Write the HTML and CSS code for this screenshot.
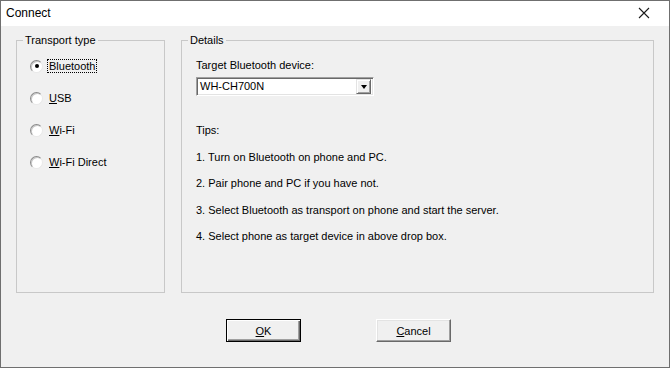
FILE: index.html
```html
<!DOCTYPE html>
<html>
<head>
<meta charset="utf-8">
<link rel="stylesheet" href="styles.css">
</head>
<body>
<div class="window">
  <div class="titlebar">
    <span class="title">Connect</span>
    <svg class="close" width="12" height="12" viewBox="0 0 12 12"><path d="M1 1 L11 11 M11 1 L1 11" stroke="#1a1a1a" stroke-width="1.1" fill="none"/></svg>
  </div>
  <div class="content">
    <div class="groups">
      <fieldset class="group group-transport">
        <legend>Transport type</legend>
        <div class="radios">
          <div class="radio"><span class="radio-circle checked"></span><span class="radio-text focus">Bluetooth</span></div>
          <div class="radio"><span class="radio-circle"></span><span class="radio-text"><u>U</u>SB</span></div>
          <div class="radio"><span class="radio-circle"></span><span class="radio-text"><u>W</u>i-Fi</span></div>
          <div class="radio"><span class="radio-circle"></span><span class="radio-text"><u>W</u>i-Fi Direct</span></div>
        </div>
      </fieldset>
      <fieldset class="group group-details">
        <legend>Details</legend>
        <div class="details">
          <div class="field-label">Target Bluetooth device:</div>
          <div class="combo">
            <span class="combo-value">WH-CH700N</span>
            <span class="combo-btn"><span class="arrow"></span></span>
          </div>
          <div class="tips">
            <div class="tip">Tips:</div>
            <div class="tip">1. Turn on Bluetooth on phone and PC.</div>
            <div class="tip">2. Pair phone and PC if you have not.</div>
            <div class="tip">3. Select Bluetooth as transport on phone and start the server.</div>
            <div class="tip">4. Select phone as target device in above drop box.</div>
          </div>
        </div>
      </fieldset>
    </div>
    <div class="buttons">
      <button class="btn btn-default"><u>O</u>K</button>
      <button class="btn"><u>C</u>ancel</button>
    </div>
  </div>
</div>
</body>
</html>
```
FILE: styles.css
```css
html, body {
  margin: 0;
  padding: 0;
  background: #f0f0f0;
}
body {
  font-family: "Liberation Sans", Arial, sans-serif;
  font-size: 11px;
  color: #000;
}
.window {
  width: 670px;
  height: 368px;
  box-sizing: border-box;
  border: 1px solid #6f6f6f;
  background: #f0f0f0;
  display: flex;
  flex-direction: column;
}
.titlebar {
  height: 25px;
  background: #fff;
  display: flex;
  align-items: center;
  justify-content: space-between;
  padding: 0 19px 0 5px;
  flex: none;
}
.title {
  font-size: 12px;
  color: #000;
  margin-top: -1px;
}
.close {
  display: block;
  margin-top: -1px;
}
.content {
  padding: 8px 15px 0 15px;
}
.groups {
  display: flex;
  gap: 16px;
}
.group {
  margin: 0;
  padding: 0;
  border: 1px solid #c8c8c8;
  height: 259px;
  box-sizing: border-box;
  min-width: 0;
}
.group legend {
  margin-left: 6px;
  padding: 0 2px;
  line-height: 13px;
  font-size: 11px;
}
.group-transport {
  width: 149px;
}
.group-details {
  width: 473px;
}
.radios {
  padding: 3px 0 0 13px;
  display: flex;
  flex-direction: column;
}
.radio {
  height: 32px;
  display: flex;
  align-items: center;
}
.radio-circle {
  width: 11px;
  height: 11px;
  border-radius: 50%;
  background: #fff;
  border: 1px solid;
  border-color: #8a8a8a #e8e8e8 #e8e8e8 #8a8a8a;
  box-shadow: inset 1px 1px 0 #c8c8c8;
  margin-right: 4px;
  position: relative;
  flex: none;
}
.radio-circle.checked::after {
  content: "";
  position: absolute;
  left: 3.5px;
  top: 3.5px;
  width: 4px;
  height: 4px;
  border-radius: 50%;
  background: #000;
}
.radio-text {
  border: 1px dotted transparent;
  padding: 0 1px;
  line-height: 12px;
  margin-left: 0;
}
.radio-text.focus {
  border-color: #000;
}
.details {
  padding: 12px 0 0 14px;
}
.field-label {
  line-height: 13px;
}
.combo {
  margin-top: 5px;
  width: 178px;
  height: 19px;
  box-sizing: border-box;
  background: #fff;
  border: 1px solid;
  border-color: #a0a0a0 #fff #fff #a0a0a0;
  box-shadow: inset 1px 1px 0 #696969, inset -1px -1px 0 #e3e3e3;
  display: flex;
  align-items: center;
  justify-content: space-between;
  padding: 0 2px 0 2px;
}
.combo-value {
  line-height: 13px;
  padding-left: 1px;
}
.combo-btn {
  width: 15px;
  height: 15px;
  box-sizing: border-box;
  background: #f0f0f0;
  border: 1px solid;
  border-color: #e3e3e3 #696969 #696969 #e3e3e3;
  box-shadow: inset 1px 1px 0 #fff, inset -1px -1px 0 #a0a0a0;
  display: flex;
  align-items: center;
  justify-content: center;
}
.arrow {
  width: 0;
  height: 0;
  border-left: 3.5px solid transparent;
  border-right: 3.5px solid transparent;
  border-top: 4px solid #000;
  margin-top: 1px;
}
.tips {
  margin-top: 28px;
  display: flex;
  flex-direction: column;
  gap: 13.5px;
}
.tip {
  line-height: 13px;
}
.buttons {
  display: flex;
  gap: 75px;
  margin-top: 26px;
  padding-left: 210px;
}
.btn {
  width: 75px;
  height: 23px;
  box-sizing: border-box;
  font-family: "Liberation Sans", Arial, sans-serif;
  font-size: 11px;
  color: #000;
  background: #f0f0f0;
  border: 1px solid;
  border-color: #fff #696969 #696969 #fff;
  box-shadow: inset -1px -1px 0 #a0a0a0, inset 1px 1px 0 #e3e3e3;
  padding: 0;
  margin: 0;
}
.btn-default {
  border-color: #000;
  box-shadow: inset 1px 1px 0 #fff, inset -1px -1px 0 #696969, inset -2px -2px 0 #a0a0a0;
}
```
